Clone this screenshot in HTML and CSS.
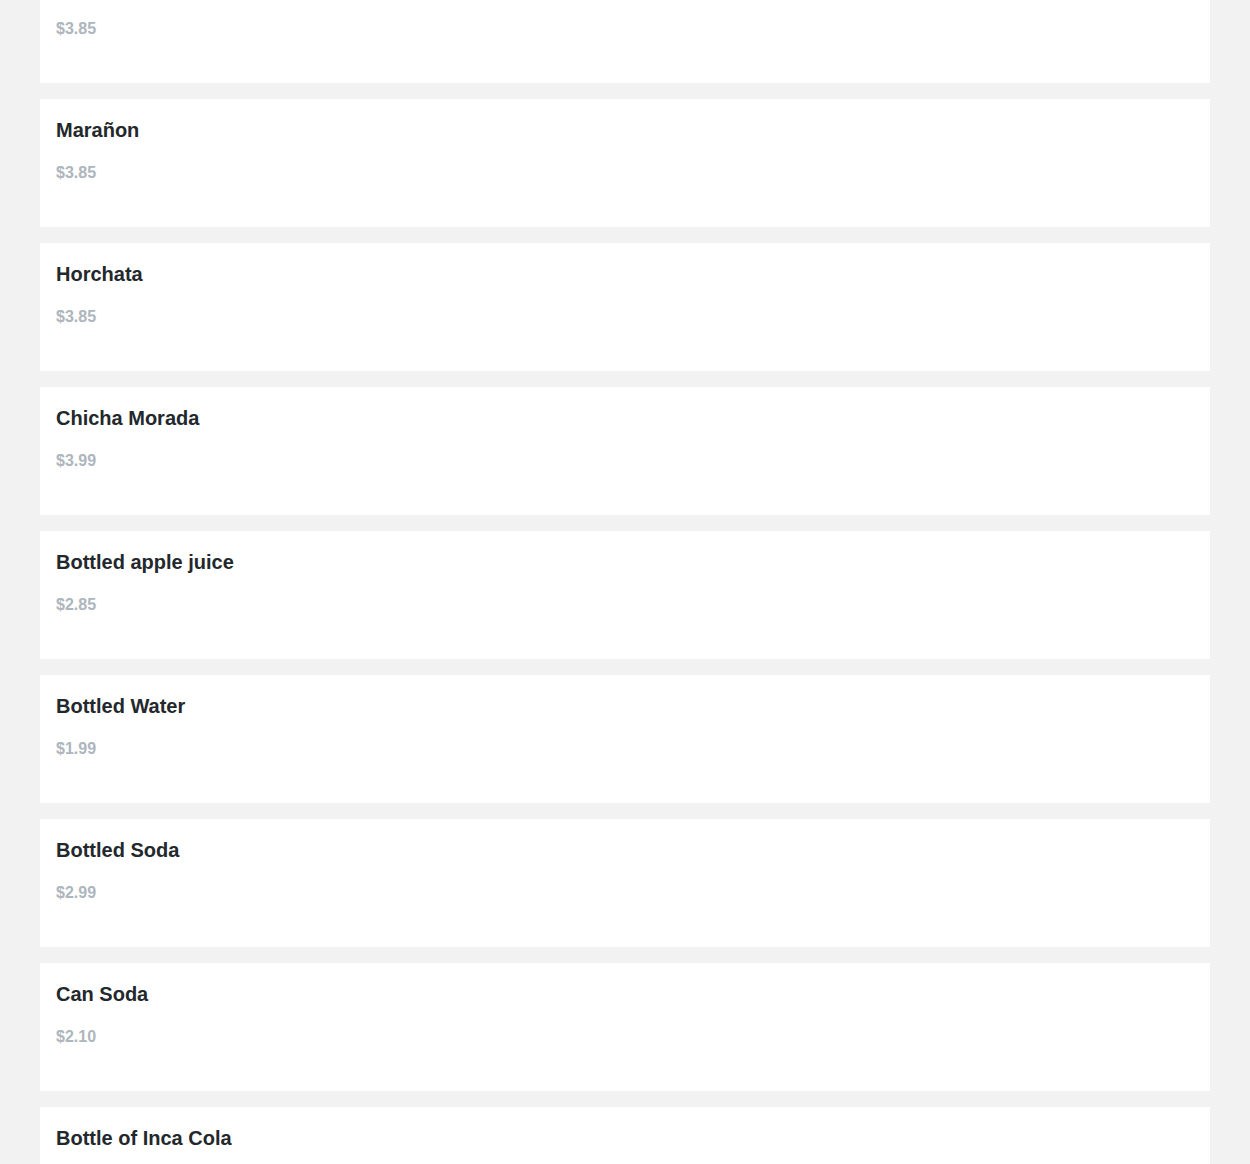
FILE: index.html
```html
<!DOCTYPE html>
<html lang="en">
<head>
<meta charset="utf-8">
<title>Drinks</title>
<link rel="stylesheet" href="styles.css">
</head>
<body>
<main class="menu">
  <div class="item"><h5 class="item-name">Tamarindo</h5><p class="item-price">$3.85</p></div>
  <div class="item"><h5 class="item-name">Marañon</h5><p class="item-price">$3.85</p></div>
  <div class="item"><h5 class="item-name">Horchata</h5><p class="item-price">$3.85</p></div>
  <div class="item"><h5 class="item-name">Chicha Morada</h5><p class="item-price">$3.99</p></div>
  <div class="item"><h5 class="item-name">Bottled apple juice</h5><p class="item-price">$2.85</p></div>
  <div class="item"><h5 class="item-name">Bottled Water</h5><p class="item-price">$1.99</p></div>
  <div class="item"><h5 class="item-name">Bottled Soda</h5><p class="item-price">$2.99</p></div>
  <div class="item"><h5 class="item-name">Can Soda</h5><p class="item-price">$2.10</p></div>
  <div class="item"><h5 class="item-name">Bottle of Inca Cola</h5><p class="item-price">$3.85</p></div>
</main>
</body>
</html>
```
FILE: styles.css
```css
html, body {
  margin: 0;
  padding: 0;
  background: #f2f2f2;
  font-family: "Liberation Sans", Arial, sans-serif;
}
.menu {
  display: flex;
  flex-direction: column;
  gap: 16px;
  padding: 0 40px 40px;
  margin-top: -45px;
}
.item {
  background: #ffffff;
  height: 128px;
  box-sizing: border-box;
  padding: 20px 16px 0;
  display: flex;
  flex-direction: column;
}
.item-name {
  margin: 0;
  font-size: 20px;
  line-height: 23px;
  font-weight: 700;
  color: #23282c;
}
.item-price {
  margin: 22px 0 0;
  font-size: 16px;
  line-height: 18px;
  font-weight: 700;
  color: #adb5bd;
}
```
